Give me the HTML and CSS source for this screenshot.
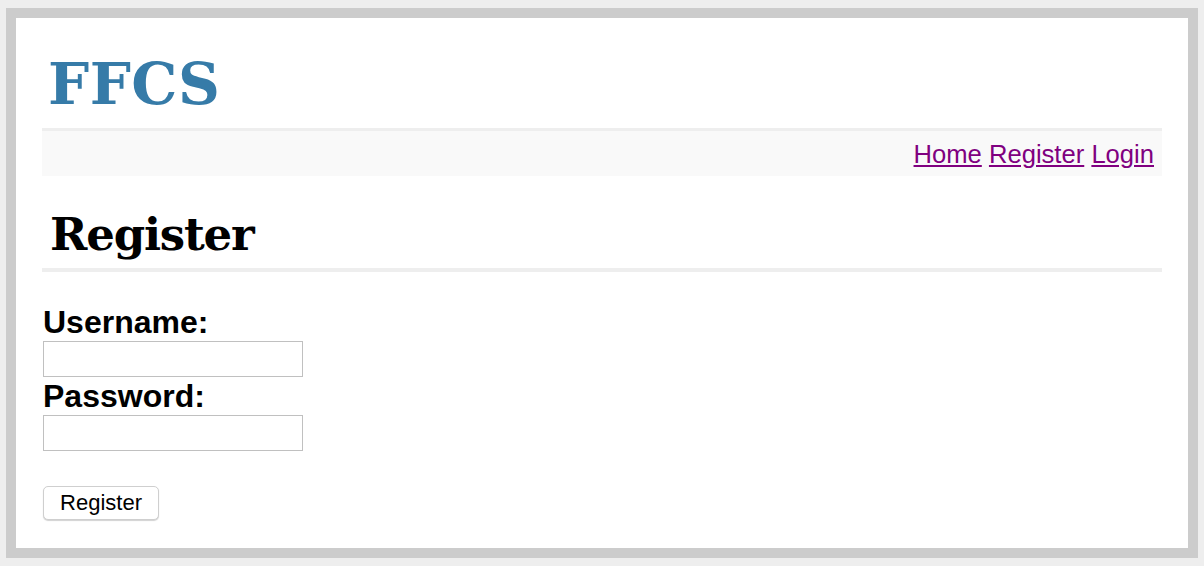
FILE: index.html
```html
<!DOCTYPE html>
<html>
<head>
<meta charset="utf-8">
<title>FFCS - Register</title>
<link rel="stylesheet" href="styles.css">
</head>
<body>
<div class="page">
  <header class="site-header">
    <div class="brand">FFCS</div>
  </header>
  <nav class="nav">
    <a href="#" class="nav-link">Home</a> <a href="#" class="nav-link">Register</a> <a href="#" class="nav-link">Login</a>
  </nav>
  <h1 class="page-title">Register</h1>
  <form class="form">
    <label class="label" for="username">Username:</label>
    <input class="input" type="text" id="username">
    <label class="label" for="password">Password:</label>
    <input class="input" type="password" id="password">
    <button class="button" type="button">Register</button>
  </form>
</div>
</body>
</html>
```
FILE: styles.css
```css
html, body {
  margin: 0;
  padding: 0;
}
body {
  background: #eeeeee;
  font-family: "Liberation Sans", Arial, sans-serif;
}
.page {
  margin: 8px 6px;
  border: 10px solid #cccccc;
  background: #ffffff;
  padding: 0 26px;
  height: 530px;
  box-sizing: content-box;
}
.site-header {
  padding: 37px 6px 15px;
  border-bottom: 3px solid #eeeeee;
}
.brand {
  font-family: "DejaVu Serif", Georgia, serif;
  font-weight: bold;
  font-size: 58px;
  line-height: 58px;
  color: #367ba8;
  letter-spacing: 0.5px;
}
.nav {
  background: #f9f9f9;
  padding: 2px 8px 0;
  height: 43px;
  line-height: 43px;
  text-align: right;
  font-size: 25.6px;
}
.nav-link {
  color: #800080;
  text-decoration: underline;
}
.page-title {
  margin: 0;
  padding: 36px 8px 11px;
  font-family: "DejaVu Serif", Georgia, serif;
  font-weight: bold;
  font-size: 45px;
  line-height: 45px;
  letter-spacing: -1.2px;
  color: #000000;
  border-bottom: 4px solid #eeeeee;
}
.form {
  display: flex;
  flex-direction: column;
  align-items: flex-start;
  padding-top: 31px;
}
.label {
  display: block;
  font-weight: bold;
  font-size: 32px;
  line-height: 38px;
  height: 38px;
  margin-left: 1px;
  color: #000;
}
.input {
  box-sizing: border-box;
  width: 260px;
  height: 36px;
  margin: 0 0 0 1px;
  border: 1px solid #c0c0c0;
  background: #fff;
  padding: 0 4px;
  font-size: 18px;
}
.button {
  box-sizing: border-box;
  margin: 35px 0 0 1px;
  width: 116px;
  height: 34px;
  border: 1px solid #cfcfcf;
  border-radius: 5px;
  background: #ffffff;
  box-shadow: 0 1px 1px rgba(0,0,0,0.18);
  font-family: "Liberation Sans", Arial, sans-serif;
  font-size: 22px;
  color: #000;
  padding: 0;
}
```
